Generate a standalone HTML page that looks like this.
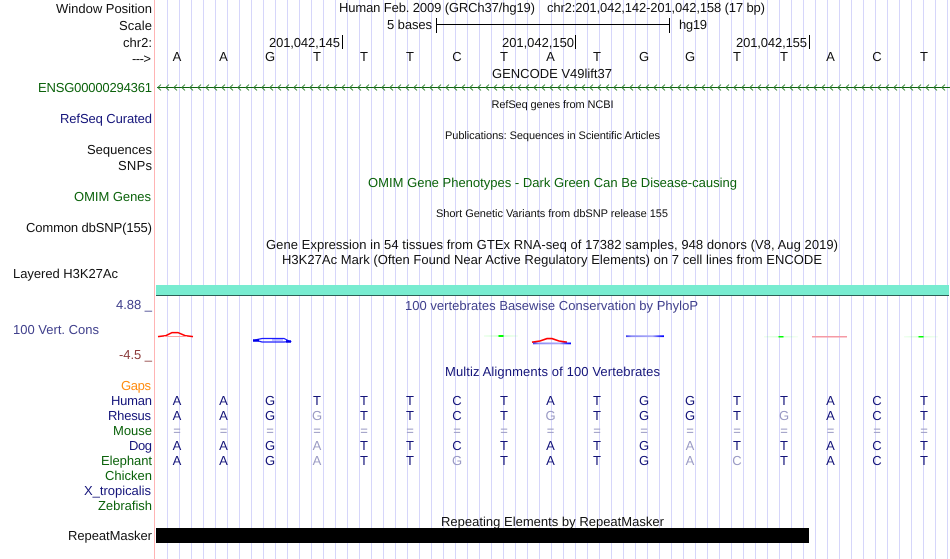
<!DOCTYPE html>
<html><head><meta charset="utf-8"><title>Genome Browser</title>
<style>
html,body{margin:0;padding:0;background:#fff;width:950px;height:559px;overflow:hidden}
svg{display:block;font-family:"Liberation Sans",sans-serif;font-size:13px;text-rendering:geometricPrecision}
.s{font-size:11px}
.n{fill:#14147a}.g{fill:#0b620b}.k{fill:#111}.p{fill:#40408c}
.b text{text-anchor:middle;font-size:13px}
.h{fill:#9a9ac4}
</style></head><body>
<svg width="950" height="559" viewBox="0 0 950 559" xmlns="http://www.w3.org/2000/svg">
<defs>
<pattern id="chev" x="157" y="84" width="8" height="7" patternUnits="userSpaceOnUse"><path d="M4 .6 L.8 3.5 L4 6.4" fill="none" stroke="#2f7f2f" stroke-width=".9"/></pattern>
<linearGradient id="gl" x1="0" x2="1" y1="0" y2="0"><stop offset="0" stop-color="#0f0" stop-opacity=".06"/><stop offset=".42" stop-color="#0f0" stop-opacity=".14"/><stop offset=".42" stop-color="#0f0"/><stop offset=".58" stop-color="#0f0"/><stop offset=".58" stop-color="#0f0" stop-opacity=".14"/><stop offset="1" stop-color="#0f0" stop-opacity=".04"/></linearGradient>
<linearGradient id="bl" x1="0" x2="1" y1="0" y2="0"><stop offset="0" stop-color="#3c3cf0"/><stop offset=".15" stop-color="#8c8cf5"/><stop offset=".7" stop-color="#aaaaf8"/><stop offset=".88" stop-color="#3030ff"/><stop offset="1" stop-color="#0000ff"/></linearGradient>
</defs>
<line x1="167" x2="950" y1="279.5" y2="279.5" stroke="#d6d6fa" stroke-width="559" stroke-dasharray="1 11" shape-rendering="crispEdges"/>
<rect x="154" y="0" width="1" height="559" fill="#ffb4b4"/>

<!-- labels -->
<g class="k">
<text x="56" y="13" textLength="96">Window Position</text>
<text x="119" y="30" textLength="33">Scale</text>
<text x="123" y="47" textLength="29">chr2:</text>
<text x="132" y="63" textLength="19">---&gt;</text>
<text x="87" y="154" textLength="65">Sequences</text>
<text x="118" y="170" textLength="34">SNPs</text>
<text x="26" y="232" textLength="126">Common dbSNP(155)</text>
<text x="13" y="278" textLength="105">Layered H3K27Ac</text>
<text x="68" y="540" textLength="84">RepeatMasker</text>
</g>
<text class="g" x="38" y="92" textLength="114">ENSG00000294361</text>
<text class="n" x="60" y="123" textLength="92">RefSeq Curated</text>
<text class="g" x="74" y="201" textLength="77">OMIM Genes</text>
<text class="p" x="116" y="309" textLength="36">4.88 _</text>
<text class="p" x="13" y="334" textLength="86">100 Vert. Cons</text>
<text x="119" y="359" textLength="33" fill="#8c3c3c">-4.5 _</text>
<text x="121" y="390" textLength="30" fill="#ff8c10">Gaps</text>
<text class="n" x="111" y="405" textLength="41">Human</text>
<text class="n" x="108" y="420" textLength="43">Rhesus</text>
<text class="g" x="113" y="435" textLength="39">Mouse</text>
<text class="n" x="129" y="450" textLength="23">Dog</text>
<text class="g" x="101" y="465" textLength="51">Elephant</text>
<text class="g" x="105" y="480" textLength="47">Chicken</text>
<text class="n" x="84" y="495" textLength="67">X_tropicalis</text>
<text class="g" x="98" y="510" textLength="54">Zebrafish</text>

<!-- header -->
<g class="k">
<text x="339" y="12" textLength="196">Human Feb. 2009 (GRCh37/hg19)</text>
<text x="547" y="12" textLength="218">chr2:201,042,142-201,042,158 (17 bp)</text>
<text x="387" y="29" textLength="45">5 bases</text>
<text x="679" y="29" textLength="28">hg19</text>
<text x="269" y="47" textLength="71">201,042,145</text>
<text x="502" y="47" textLength="72">201,042,150</text>
<text x="736" y="47" textLength="71">201,042,155</text>
<text x="492" y="78" textLength="120">GENCODE V49lift37</text>
<text class="s" x="491.5" y="108" textLength="122">RefSeq genes from NCBI</text>
<text class="s" x="445" y="139" textLength="215">Publications: Sequences in Scientific Articles</text>
<text class="s" x="436" y="217" textLength="232">Short Genetic Variants from dbSNP release 155</text>
<text x="266" y="249" textLength="572">Gene Expression in 54 tissues from GTEx RNA-seq of 17382 samples, 948 donors (V8, Aug 2019)</text>
<text x="282" y="264" textLength="540">H3K27Ac Mark (Often Found Near Active Regulatory Elements) on 7 cell lines from ENCODE</text>
<text x="441" y="526" textLength="223">Repeating Elements by RepeatMasker</text>
</g>
<text class="g" x="368" y="187" textLength="369">OMIM Gene Phenotypes - Dark Green Can Be Disease-causing</text>
<text class="p" x="405" y="310" textLength="293">100 vertebrates Basewise Conservation by PhyloP</text>
<text class="n" x="445" y="376" textLength="215">Multiz Alignments of 100 Vertebrates</text>

<!-- scale + ticks -->
<g fill="#000">
<rect x="436" y="18" width="1" height="15"/>
<rect x="437" y="24" width="232" height="1"/>
<rect x="669" y="18" width="1" height="15"/>
<rect x="342" y="35" width="1" height="14"/>
<rect x="575" y="35" width="1" height="14"/>
<rect x="809" y="35" width="1" height="14"/>
</g>

<!-- bases -->
<g class="b k" fill="#111">
<text x="177" y="61">A</text><text x="223.5" y="61">A</text><text x="270" y="61">G</text><text x="317" y="61">T</text><text x="364" y="61">T</text><text x="410" y="61">T</text><text x="457" y="61">C</text><text x="504" y="61">T</text><text x="550.5" y="61">A</text><text x="597" y="61">T</text><text x="644" y="61">G</text><text x="690" y="61">G</text><text x="737" y="61">T</text><text x="784" y="61">T</text><text x="830.5" y="61">A</text><text x="877" y="61">C</text><text x="924" y="61">T</text>
</g>

<!-- GENCODE track -->
<rect x="157" y="87" width="793" height="1" fill="#0b620b"/>
<rect x="157" y="84" width="793" height="7" fill="url(#chev)"/>

<!-- H3K27Ac -->
<rect x="156" y="285" width="793" height="10" fill="#78ecd0"/>
<rect x="156" y="295" width="793" height="1" fill="#2c5f55"/>

<!-- conservation -->
<g fill="none">
<path d="M158 336.6 L166 335.6 L172 332.6 L178 332.6 L185 335.6 L193 336.6" stroke="#f00" stroke-width="1.5"/>
<path d="M164 336.5 H187" stroke="#ffa0a0" stroke-width="1"/>
<path d="M255 340 L262 338.5 H284 L290 341.5 L284 342 H262 Z" stroke="#1a1aff" stroke-width="1.2"/>
<path d="M253 340.5 H259 M286 341.5 H291" stroke="#0000e8" stroke-width="2.4"/>
<path d="M272 340 H283" stroke="#a0a0ff" stroke-width="1.2"/>
<rect x="484" y="335" width="34" height="2" fill="url(#gl)"/>
<path d="M532 342.2 L540 341 L547 338.6 H552 L559 341 L567 342.2" stroke="#f00" stroke-width="1.6"/>
<rect x="533" y="342.5" width="38" height="1.8" fill="url(#bl)"/>
<rect x="626" y="335.3" width="38" height="1.8" fill="url(#bl)"/>
<rect x="764" y="336" width="34" height="1.5" fill="url(#gl)"/>
<rect x="812" y="336" width="35" height="1.5" fill="#f59aa4"/>
<rect x="904" y="336" width="34" height="1.5" fill="url(#gl)"/>
</g>

<!-- alignments -->
<g class="b n">
<text x="177" y="405">A</text><text x="223.5" y="405">A</text><text x="270" y="405">G</text><text x="317" y="405">T</text><text x="364" y="405">T</text><text x="410" y="405">T</text><text x="457" y="405">C</text><text x="504" y="405">T</text><text x="550.5" y="405">A</text><text x="597" y="405">T</text><text x="644" y="405">G</text><text x="690" y="405">G</text><text x="737" y="405">T</text><text x="784" y="405">T</text><text x="830.5" y="405">A</text><text x="877" y="405">C</text><text x="924" y="405">T</text>
<text x="177" y="420">A</text><text x="223.5" y="420">A</text><text x="270" y="420">G</text><text class="h" x="317" y="420">G</text><text x="364" y="420">T</text><text x="410" y="420">T</text><text x="457" y="420">C</text><text x="504" y="420">T</text><text class="h" x="550.5" y="420">G</text><text x="597" y="420">T</text><text x="644" y="420">G</text><text x="690" y="420">G</text><text x="737" y="420">T</text><text class="h" x="784" y="420">G</text><text x="830.5" y="420">A</text><text x="877" y="420">C</text><text x="924" y="420">T</text>
<g class="h"><text x="177" y="435">=</text><text x="223.5" y="435">=</text><text x="270" y="435">=</text><text x="317" y="435">=</text><text x="364" y="435">=</text><text x="410" y="435">=</text><text x="457" y="435">=</text><text x="504" y="435">=</text><text x="550.5" y="435">=</text><text x="597" y="435">=</text><text x="644" y="435">=</text><text x="690" y="435">=</text><text x="737" y="435">=</text><text x="784" y="435">=</text><text x="830.5" y="435">=</text><text x="877" y="435">=</text><text x="924" y="435">=</text></g>
<text x="177" y="450">A</text><text x="223.5" y="450">A</text><text x="270" y="450">G</text><text class="h" x="317" y="450">A</text><text x="364" y="450">T</text><text x="410" y="450">T</text><text x="457" y="450">C</text><text x="504" y="450">T</text><text x="550.5" y="450">A</text><text x="597" y="450">T</text><text x="644" y="450">G</text><text class="h" x="690" y="450">A</text><text x="737" y="450">T</text><text x="784" y="450">T</text><text x="830.5" y="450">A</text><text x="877" y="450">C</text><text x="924" y="450">T</text>
<text x="177" y="465">A</text><text x="223.5" y="465">A</text><text x="270" y="465">G</text><text class="h" x="317" y="465">A</text><text x="364" y="465">T</text><text x="410" y="465">T</text><text class="h" x="457" y="465">G</text><text x="504" y="465">T</text><text x="550.5" y="465">A</text><text x="597" y="465">T</text><text x="644" y="465">G</text><text class="h" x="690" y="465">A</text><text class="h" x="737" y="465">C</text><text x="784" y="465">T</text><text x="830.5" y="465">A</text><text x="877" y="465">C</text><text x="924" y="465">T</text>
</g>

<!-- RepeatMasker -->
<rect x="156" y="528" width="653" height="15" fill="#000"/>
</svg>
</body></html>
